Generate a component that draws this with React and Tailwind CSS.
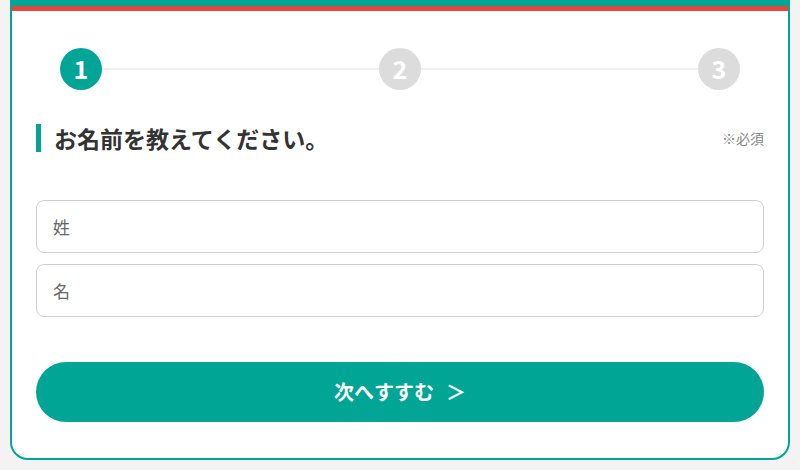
import React, { useState } from "react";

const font = { fontFamily: '"Noto Sans CJK JP", "Noto Sans", sans-serif' };

function Step({ num, active }) {
	return (
		<div
			className={`w-[42px] h-[42px] rounded-full flex items-center justify-center text-white text-[25px] font-bold shrink-0 ${
				active ? "bg-[#00a595]" : "bg-[#dcdcdc]"
			}`}
		>
			{num}
		</div>
	);
}

function App() {
	const [values, setValues] = useState({ last: "", first: "" });

	return (
		<div className="w-[800px] h-[470px] bg-[#f3f3f3] px-[10px] pb-[10px]" style={font}>
			{/* CARD */}
			<div className="h-full bg-white border-2 border-t-0 border-[#00a595] rounded-b-[18px] overflow-hidden flex flex-col">
				<div className="h-[6px] bg-[#00a595]" />
				<div className="h-[5px] bg-[#e8453c]" />

				<div className="px-[24px] flex flex-col">
					{/* STEPS */}
					<div className="flex items-center mt-[37px] px-[24px]">
						<Step num="1" active />
						<div className="flex-1 h-[2px] bg-[#efefef]" />
						<Step num="2" />
						<div className="flex-1 h-[2px] bg-[#efefef]" />
						<Step num="3" />
					</div>

					{/* HEADING */}
					<div className="flex items-center justify-between mt-[31px] h-[34px]">
						<div className="flex items-center gap-[13px]">
							<span className="w-[5px] h-[28px] bg-[#00a595]" />
							<h1 className="text-[23px] leading-[34px] font-bold text-[#333]">お名前を教えてください。</h1>
						</div>
						<span className="text-[14px] text-[#888]">※必須</span>
					</div>

					{/* INPUTS */}
					<div className="flex flex-col gap-[11px] mt-[45px]">
						<input
							type="text"
							placeholder="姓"
							className="h-[53px] border border-[#cfcfcf] rounded-[8px] px-[16px] text-[17px] placeholder:text-[#666] outline-none"
							value={values.last}
							onChange={(e) => setValues((prev) => ({ ...prev, last: e.target.value }))}
						/>
						<input
							type="text"
							placeholder="名"
							className="h-[53px] border border-[#cfcfcf] rounded-[8px] px-[16px] text-[17px] placeholder:text-[#666] outline-none"
							value={values.first}
							onChange={(e) => setValues((prev) => ({ ...prev, first: e.target.value }))}
						/>
					</div>

					{/* NEXT BUTTON */}
					<button className="mt-[45px] h-[60px] rounded-full bg-[#00a595] text-white text-[20px] font-bold flex items-center justify-center gap-[12px]">
						<span>次へすすむ</span>
						<span>＞</span>
					</button>
				</div>
			</div>
		</div>
	);
}

export default App;
